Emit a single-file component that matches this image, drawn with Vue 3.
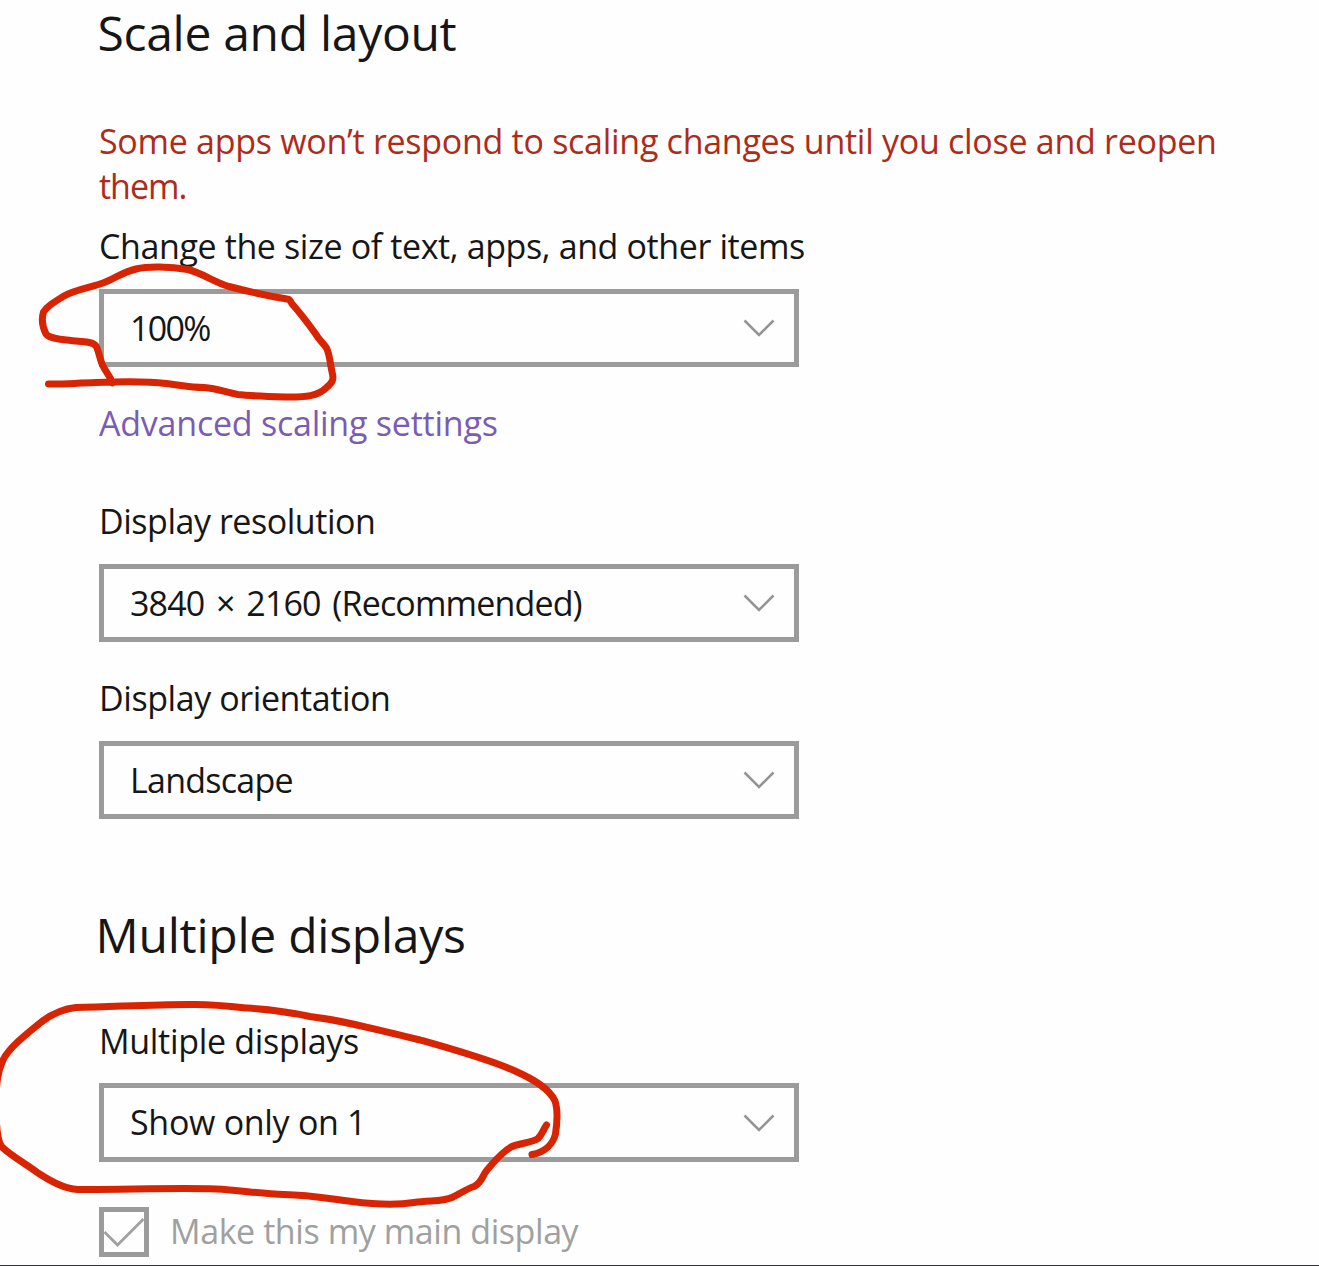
<script setup>
const scaling = { value: '100%', ls: -1.7 }
const screenFields = [
  { label: 'Display resolution', labelLs: -0.46, value: '3840 × 2160 (Recommended)', ls: -0.85, ws: 3.7 },
  { label: 'Display orientation', labelLs: -0.42, value: 'Landscape', ls: -0.75, ws: 0 },
]
const chevron = 'M1.5 1.5 L16 16 L30.5 1.5'
</script>

<template>
  <main class="page">
    <h2 class="heading">Scale and layout</h2>

    <p class="notice">
      Some apps won’t respond to scaling changes until you close and reopen
      <span class="notice-end">them.</span>
    </p>

    <label class="label label-size">Change the size of text, apps, and other items</label>
    <div class="select">
      <span :style="{ letterSpacing: scaling.ls + 'px' }">{{ scaling.value }}</span>
      <svg class="chevron" viewBox="0 0 32 18"><path :d="chevron" /></svg>
    </div>

    <a class="link">Advanced scaling settings</a>

    <div class="fields">
      <div v-for="f in screenFields" :key="f.label" class="field">
        <label class="label" :style="{ letterSpacing: f.labelLs + 'px' }">{{ f.label }}</label>
        <div class="select">
          <span :style="{ letterSpacing: f.ls + 'px', wordSpacing: f.ws + 'px' }">{{ f.value }}</span>
          <svg class="chevron" viewBox="0 0 32 18"><path :d="chevron" /></svg>
        </div>
      </div>
    </div>

    <h2 class="heading heading-displays">Multiple displays</h2>
    <label class="label label-displays">Multiple displays</label>
    <div class="select select-displays">
      <span class="show-only">Show only on 1</span>
      <svg class="chevron" viewBox="0 0 32 18"><path :d="chevron" /></svg>
    </div>

    <div class="check-row">
      <span class="checkbox">
        <svg viewBox="0 0 40 40"><path d="M0.5 20 L13.5 33 L39.500 7" /></svg>
      </span>
      <span class="check-label">Make this my main display</span>
    </div>

    <svg class="ink" viewBox="0 0 1319 1266">
      <path d="M48.500 384 C62 384.500 76 383 96 382.500 C120 381.500 150 381.500 166 383.500 C180 385 190 387.500 204 387.500 C218 388.500 226 392.500 238 394.500 C250 396 268 396.500 286 397 C306 397.300 318 396 326 388 C332 383 334 380 332.500 374 C330 364 330 355 326.500 348 C324 344 319 340 315 333 C307 322 301 314 293 305 C290 302 291 299 287 299 C272 296.500 248 291.500 229 286.500 C214 282 202 273 188 269.500 C170 266.500 148 266 136 269 C123 272 114 279 103 283 C92 287 74 290 64 296 C55 301.500 47 306 43.500 312 C41 320 43 328 46 334 C50 339 64 340 76 341 C84 342 93 341.500 96 346 C99 351 99.500 359 103 366 C106 372 110 376 112.500 383" />
      <path d="M532 1154.500 C545 1152 553 1144 555.500 1134 C557 1124 558 1110 555 1101 C549 1088 533 1079 515 1071 C488 1059 452 1049 420 1040 C380 1030 340 1020 310 1016.500 C280 1010 262 1009 246 1008 C228 1006 212 1004.500 196 1004.500 C160 1004 120 1006.500 76 1007.500 C62 1009 50 1015 40 1023 C24 1036 9 1048 3 1060 C-2 1071 -4 1082 -4 1105 C-4 1128 -3 1141 2 1147 C10 1155 26 1164 38 1173 C52 1182 64 1188.500 78 1189.500 C120 1190 170 1187.500 216 1189 C240 1190 260 1194 284 1194.500 C312 1195 330 1199 352 1201.500 C376 1204.500 398 1205 414 1202.500 C430 1200 442 1202 452 1197.500 C460 1194 466 1189 474 1186.500 C482 1183 482 1176 487 1170 C494 1162 501 1153 511 1147 C519 1143 532 1143 538 1138.500 C542 1135 543 1130 546.500 1125" />
    </svg>
  </main>
</template>

<style>
body {
  margin: 0;
  background: #fefefe;
}
</style>

<style scoped>
.page {
  position: relative;
  box-sizing: border-box;
  width: 1319px;
  height: 1266px;
  padding-left: 99px;
  overflow: hidden;
  border-bottom: 1px solid #333336;
  background: #fefefe;
  color: #161616;
  font: 400 34px/45px "Open Sans", "Noto Sans", sans-serif;
  white-space: nowrap;
}

.heading {
  margin: 0 0 0 -1.500px;
  font-weight: 400;
  font-size: 48px;
  line-height: 66px;
  height: 62px;
  letter-spacing: -0.3px;
}

.notice {
  width: 1180px;
  margin: 57px 0 15px;
  color: #b02a18;
  letter-spacing: -0.28px;
  white-space: normal;
}

.notice-end {
  letter-spacing: -1px;
}

.label {
  display: block;
  margin-bottom: 20px;
}

.label-size {
  letter-spacing: -0.39px;
}

.select {
  display: flex;
  align-items: center;
  justify-content: space-between;
  box-sizing: border-box;
  width: 700px;
  height: 78px;
  padding: 0 19px 0 26px;
  border: 5px solid #9b9b9b;
}

.chevron {
  width: 32px;
  height: 18px;
  fill: none;
  stroke: #949494;
  stroke-width: 2.500;
}

.link {
  display: block;
  margin: 34px 0 53px;
  color: #7a5cb4;
  letter-spacing: -0.23px;
}

.fields {
  display: flex;
  flex-direction: column;
  gap: 34px;
}

.heading-displays {
  margin-top: 84px;
  margin-left: -3.500px;
  line-height: 64px;
  letter-spacing: -0.24px;
}

.label-displays {
  margin: 54px 0 19px;
  letter-spacing: -0.31px;
}

.show-only {
  letter-spacing: -0.3px;
}

.select-displays {
  height: 79px;
}

.check-row {
  display: flex;
  align-items: center;
  gap: 21px;
  margin-top: 45px;
  height: 50px;
}

.checkbox {
  box-sizing: border-box;
  width: 50px;
  height: 50px;
  border: 5px solid #9b9b9b;
}

.checkbox svg {
  display: block;
  width: 40px;
  height: 40px;
  fill: none;
  stroke: #a0a0a0;
  stroke-width: 2.800;
}

.check-label {
  margin-bottom: 2px;
  color: #a0a0a0;
  letter-spacing: -0.42px;
}

.ink {
  position: absolute;
  inset: 0;
  width: 1319px;
  height: 1266px;
  fill: none;
  stroke: #d82402;
  stroke-width: 7;
  stroke-linecap: round;
  stroke-linejoin: round;
  pointer-events: none;
}
</style>
